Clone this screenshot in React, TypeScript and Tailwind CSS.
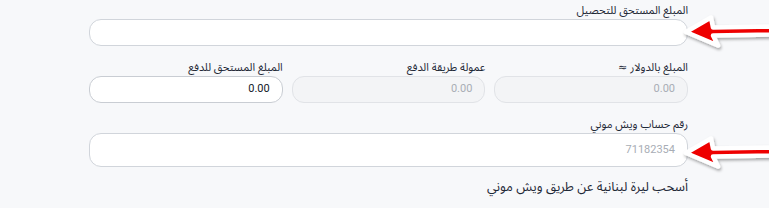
import type { ReactNode } from 'react';

const arabic = { fontFamily: '"Noto Sans Arabic", "DejaVu Sans", "Noto Sans", sans-serif' };

function Field({ label, children }: { label: string; children: ReactNode }) {
  return (
    <div className="flex flex-col">
      <label className="h-4 text-[11px] leading-4 text-[#1f2937]" style={arabic}>
        {label}
      </label>
      {children}
    </div>
  );
}

function Arrow({ className }: { className: string }) {
  return (
    <svg className={className} width="89" height="48" viewBox="0 0 89 48" fill="none">
      <defs>
        <filter id="sh" x="-20%" y="-30%" width="150%" height="180%">
          <feDropShadow dx="1" dy="2" stdDeviation="1.5" floodColor="#000" floodOpacity="0.35" />
        </filter>
      </defs>
      <path
        d="M6 22 L31 7.5 L33 17.5 L92 16.5 L92 24.5 L33 25.5 L38 35.5 Z"
        fill="#ee0000"
        stroke="#fff"
        strokeWidth="4.5"
        strokeLinejoin="round"
        filter="url(#sh)"
      />
    </svg>
  );
}

export default function App() {
  return (
    <div className="relative h-[208px] w-[769px] overflow-hidden bg-[#f7f8fa]">
      <div dir="rtl" className="ml-[89px] flex w-[599px] flex-col pt-[3px]">
        <Field label="المبلغ المستحق للتحصيل">
          <div className="h-[27px] rounded-xl border border-[#d1d5db] bg-white" />
        </Field>

        <div className="mt-[14px] grid grid-cols-3 gap-[9px]">
          <Field label="المبلغ بالدولار ≈">
            <div className="flex h-[27px] items-center rounded-xl border border-[#e1e3e7] bg-[#f3f4f6] px-3 text-[11px] text-[#a8adb5]" style={{ fontFamily: 'Roboto, sans-serif' }}>
              0.00
            </div>
          </Field>
          <Field label="عمولة طريقة الدفع">
            <div className="flex h-[27px] items-center rounded-xl border border-[#e1e3e7] bg-[#f3f4f6] px-3 text-[11px] text-[#a8adb5]" style={{ fontFamily: 'Roboto, sans-serif' }}>
              0.00
            </div>
          </Field>
          <Field label="المبلغ المستحق للدفع">
            <div className="flex h-[27px] items-center rounded-xl border border-[#c9cdd3] bg-white px-3 text-[11px] text-[#111827]" style={{ fontFamily: 'Roboto, sans-serif' }}>
              0.00
            </div>
          </Field>
        </div>

        <div className="mt-[14px]">
          <Field label="رقم حساب ويش موني">
            <div className="flex h-[34px] items-center rounded-xl border border-[#d1d5db] bg-white px-3 text-[11px] text-[#a8adb5]" style={{ fontFamily: 'Roboto, sans-serif' }}>
              71182354
            </div>
          </Field>
        </div>

        <p className="mt-[10px] h-5 text-[13px] leading-5 text-[#1f2937]" style={arabic}>
          أسحب ليرة لبنانية عن طريق ويش موني
        </p>
      </div>

      <Arrow className="absolute left-[680px] top-[10px]" />
      <Arrow className="absolute left-[680px] top-[131px]" />
    </div>
  );
}
